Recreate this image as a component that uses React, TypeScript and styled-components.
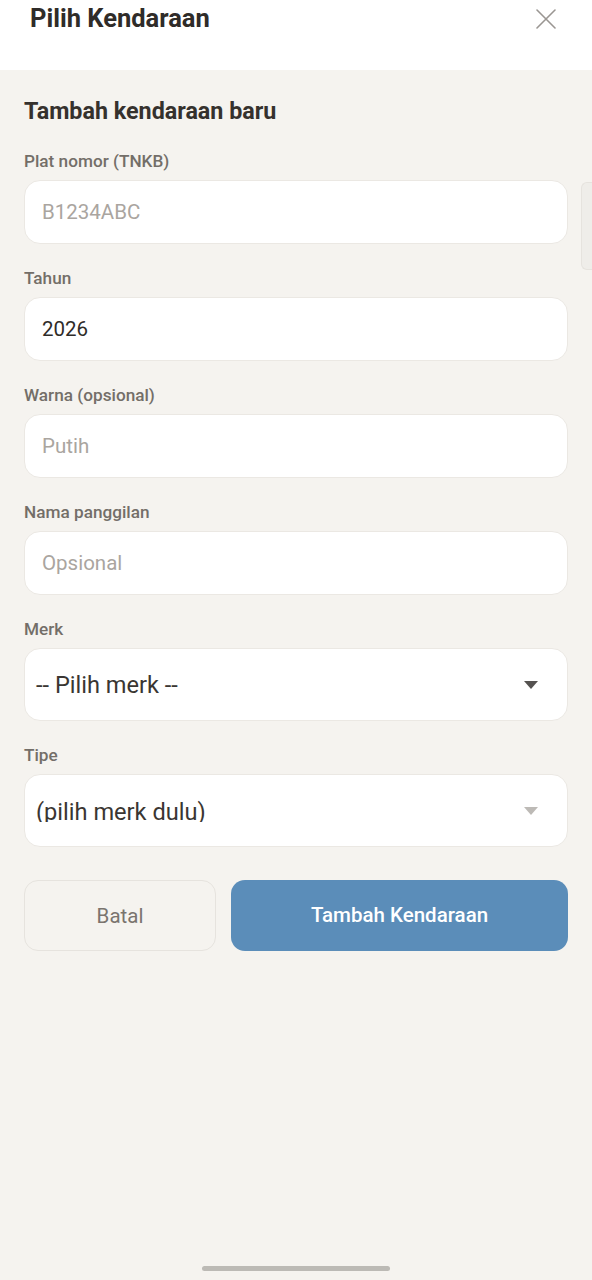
import React from 'react';
import styled, { createGlobalStyle } from 'styled-components';

const GlobalStyle = createGlobalStyle`
  html, body {
    margin: 0;
    padding: 0;
    background: #f5f3ef;
  }
  body {
    font-family: Roboto, 'Noto Sans', 'Liberation Sans', sans-serif;
  }
`;

const Screen = styled.div`
  position: relative;
  width: 592px;
  height: 1280px;
  background: #f5f3ef;
  overflow: hidden;
`;

const Header = styled.header`
  height: 70px;
  background: #ffffff;
  display: flex;
  justify-content: space-between;
  align-items: flex-start;
  padding: 0 35px 0 30px;
  box-sizing: border-box;
`;

const HeaderTitle = styled.h1`
  margin: 3px 0 0;
  font-size: 25.5px;
  line-height: 30px;
  font-weight: 700;
  color: #2f2c29;
`;

const CloseButton = styled.button`
  border: none;
  background: transparent;
  padding: 0;
  margin-top: 8px;
  width: 22px;
  height: 22px;
  display: flex;
  align-items: center;
  justify-content: center;
`;

const Body = styled.main`
  padding: 26px 24px 0;
`;

const SectionTitle = styled.h2`
  margin: 0 0 25px;
  font-size: 23.3px;
  line-height: 30px;
  font-weight: 700;
  color: #35312d;
`;

const Field = styled.div`
  display: flex;
  flex-direction: column;
  gap: 8px;
  margin-bottom: 24px;
`;

const Label = styled.label`
  font-size: 17.2px;
  line-height: 21px;
  font-weight: 500;
  color: #736e68;
`;

const Input = styled.input`
  box-sizing: border-box;
  width: 100%;
  height: 64px;
  border: 1px solid #ebe8e3;
  border-radius: 16px;
  background: #ffffff;
  padding: 0 17px;
  font-family: inherit;
  font-size: 20.5px;
  color: #2f2c29;
  outline: none;

  &::placeholder {
    color: #aaa59f;
  }
`;

const Select = styled.div<{ $disabled?: boolean }>`
  box-sizing: border-box;
  height: 73px;
  border: 1px solid #ebe8e3;
  border-radius: 16px;
  background: #ffffff;
  padding: 0 28px 0 11px;
  display: flex;
  align-items: ${p => (p.$disabled ? 'flex-end' : 'center')};
  justify-content: space-between;
`;

const SelectText = styled.span<{ $clipped?: boolean }>`
  display: block;
  font-size: 23.6px;
  line-height: 28px;
  color: #3a3632;
  ${p => p.$clipped && `
    height: 24px;
    overflow: hidden;
    margin-bottom: 24px;
  `}
`;

const Caret = styled.svg<{ $muted?: boolean }>`
  width: 16px;
  height: 8px;
  fill: ${p => (p.$muted ? '#bdbab6' : '#555250')};
  ${p => p.$muted && 'align-self: center;'}
`;

const Actions = styled.div`
  display: grid;
  grid-template-columns: 192px 1fr;
  gap: 15px;
  margin-top: 33px;
`;

const GhostButton = styled.button`
  height: 71px;
  border: 1px solid #e6e3de;
  border-radius: 14px;
  background: #f5f3ef;
  font-family: inherit;
  font-size: 20.5px;
  color: #7a746e;
`;

const PrimaryButton = styled.button`
  height: 71px;
  border: none;
  border-radius: 14px;
  background: #5b8db9;
  font-family: inherit;
  font-size: 20.5px;
  font-weight: 500;
  color: #ffffff;
  padding-bottom: 3px;
`;

const ScrollThumb = styled.div`
  position: absolute;
  right: 0;
  top: 182px;
  width: 10px;
  height: 86px;
  border-radius: 6px 0 0 6px;
  background: #efede9;
  border: 1px solid #e6e3de;
  border-right: none;
`;

const HomeIndicator = styled.div`
  position: absolute;
  left: 202px;
  bottom: 9px;
  width: 188px;
  height: 5px;
  border-radius: 3px;
  background: #bcbab5;
`;

const fields = [
  { label: 'Plat nomor (TNKB)', placeholder: 'B1234ABC', value: '' },
  { label: 'Tahun', placeholder: '', value: '2026' },
  { label: 'Warna (opsional)', placeholder: 'Putih', value: '' },
  { label: 'Nama panggilan', placeholder: 'Opsional', value: '' },
];

const CaretIcon: React.FC<{ muted?: boolean }> = ({ muted }) => (
  <Caret $muted={muted} viewBox="0 0 16 8">
    <path d="M1 0h14L8 8z" />
  </Caret>
);

const App: React.FC = () => {
  return (
    <Screen>
      <GlobalStyle />
      <Header>
        <HeaderTitle>Pilih Kendaraan</HeaderTitle>
        <CloseButton aria-label="Tutup">
          <svg width="20" height="20" viewBox="0 0 20 20" fill="none" stroke="#9a9692" strokeWidth="1.6" strokeLinecap="round">
            <path d="M1 1l18 18M19 1L1 19" />
          </svg>
        </CloseButton>
      </Header>
      <Body>
        <SectionTitle>Tambah kendaraan baru</SectionTitle>
        {fields.map(f => (
          <Field key={f.label}>
            <Label>{f.label}</Label>
            <Input placeholder={f.placeholder} defaultValue={f.value} />
          </Field>
        ))}
        <Field>
          <Label>Merk</Label>
          <Select>
            <SelectText>-- Pilih merk --</SelectText>
            <CaretIcon />
          </Select>
        </Field>
        <Field>
          <Label>Tipe</Label>
          <Select $disabled>
            <SelectText $clipped>(pilih merk dulu)</SelectText>
            <CaretIcon muted />
          </Select>
        </Field>
        <Actions>
          <GhostButton>Batal</GhostButton>
          <PrimaryButton>Tambah Kendaraan</PrimaryButton>
        </Actions>
      </Body>
      <ScrollThumb />
      <HomeIndicator />
    </Screen>
  );
};

export default App;
